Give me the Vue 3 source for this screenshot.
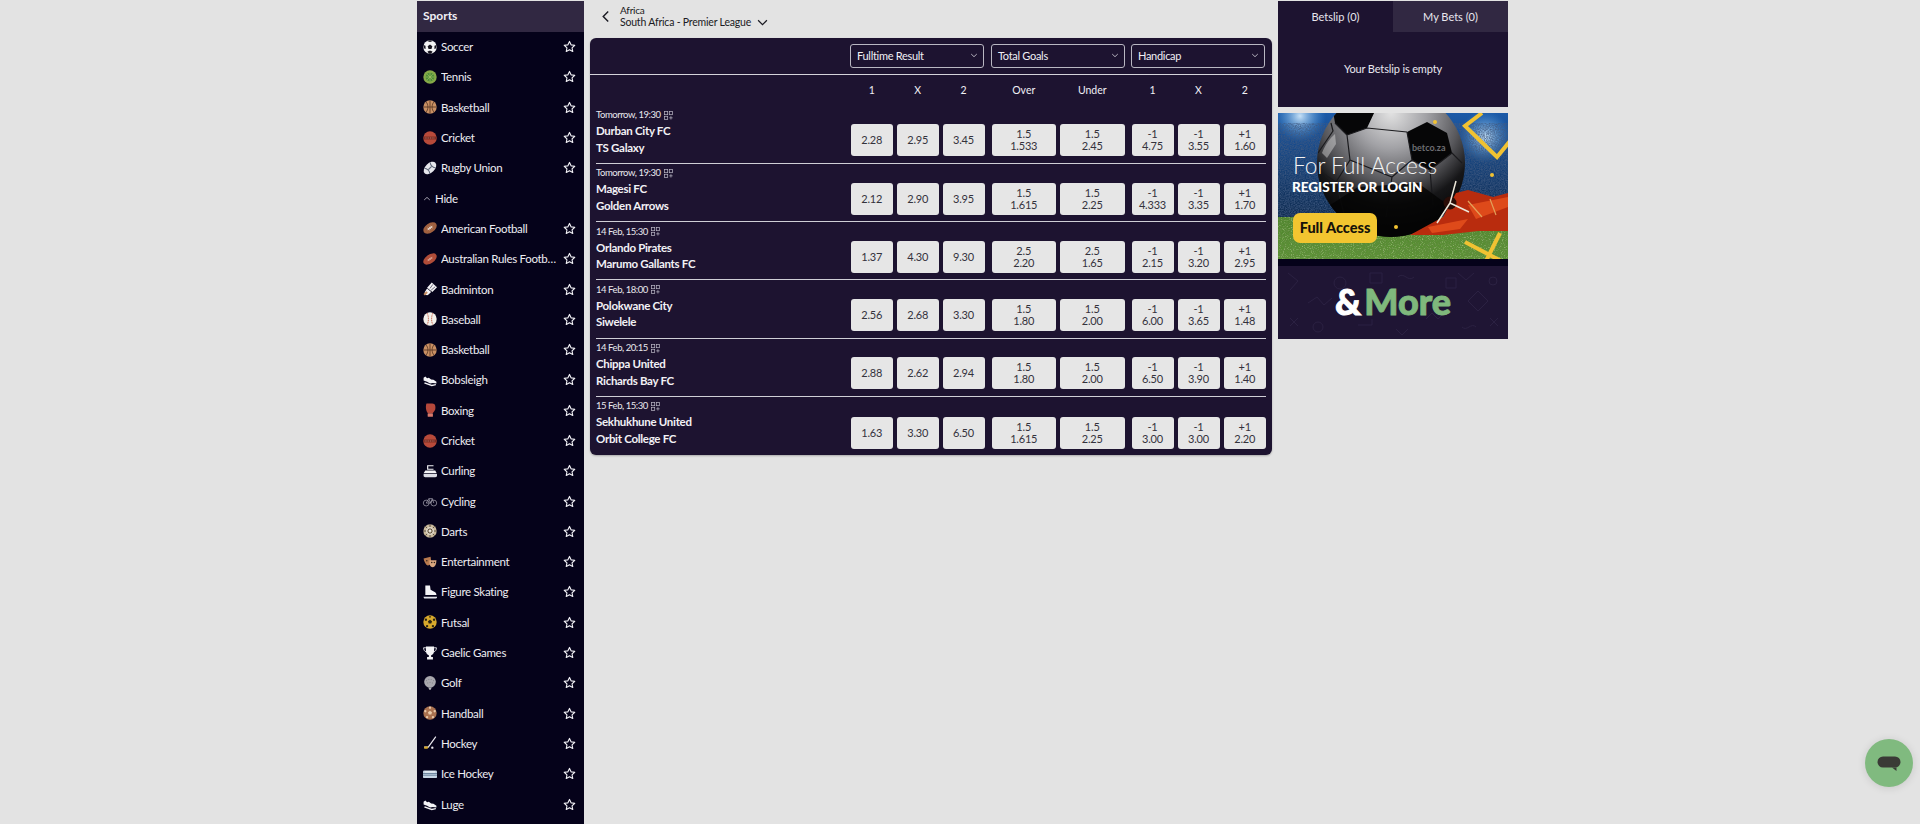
<template>
  <div class="page">
    <aside class="sidebar">
      <div class="side-title">Sports</div>
      <template v-for="(s, i) in sports" :key="i">
        <div v-if="s.hide" class="hide-row">
          <svg class="hide-caret" viewBox="0 0 10 6"><path d="M1.5 4.8 5 1.6l3.5 3.2" fill="none" stroke="#c9c6d2" stroke-width="1"/></svg>
          <span>Hide</span>
        </div>
        <div v-else class="side-row">
          <svg class="side-icon" viewBox="0 0 24 24"><g v-html="icons[s.icon]"></g></svg>
          <span class="side-name">{{ s.name }}</span>
          <svg class="star" viewBox="0 0 24 24"><path d="M12 2.6l2.9 6.3 6.8.8-5 4.7 1.3 6.8-6-3.4-6 3.4 1.3-6.8-5-4.700 6.800-.8z" fill="none" stroke="#f1f0f5" stroke-width="2.1" stroke-linejoin="round"/></svg>
        </div>
      </template>
    </aside>

    <main class="center">
      <div class="crumbs">
        <svg class="back" viewBox="0 0 10 14"><path d="M8 1.5 2.5 7 8 12.5" fill="none" stroke="#1a1a22" stroke-width="1.6"/></svg>
        <div>
          <div class="crumb-top">Africa</div>
          <div class="crumb-league">
            South Africa - Premier League
            <svg class="crumb-chev" viewBox="0 0 10 6"><path d="M1 1l4 4 4-4" fill="none" stroke="#1a1a22" stroke-width="1.1"/></svg>
          </div>
        </div>
      </div>

      <section class="panel">
        <div class="selects">
          <div v-for="m in markets" :key="m" class="select" :class="{ first: m === 'Fulltime Result' }">
            <span>{{ m }}</span>
            <svg viewBox="0 0 10 6"><path d="M1.5 1.2 5 4.5l3.5-3.3" fill="none" stroke="#d8d6de" stroke-width="1"/></svg>
          </div>
        </div>

        <div class="heads">
          <div class="grid-odds">
            <span>1</span><span>X</span><span>2</span>
            <span class="gap-left">Over</span><span>Under</span>
            <span class="gap-left">1</span><span>X</span><span>2</span>
          </div>
        </div>

        <div v-for="(g, i) in games" :key="i" class="game">
          <div class="teams">
            <div class="when">
              {{ g.when }}
              <svg class="bb" viewBox="0 0 10 10"><g fill="none" stroke="#b9b6c4" stroke-width=".8"><rect x=".5" y=".5" width="3.6" height="3.6"/><rect x="5.9" y=".5" width="3.6" height="3.6"/><rect x=".5" y="5.9" width="3.6" height="3.6"/><path d="M7.7 5.7v3.8M5.8 7.6h3.8"/></g></svg>
            </div>
            <div class="team">{{ g.home }}</div>
            <div class="team">{{ g.away }}</div>
          </div>
          <div class="grid-odds">
            <button v-for="(o, j) in g.odds" :key="j" class="odd" :class="{ 'gap-left': j === 3 || j === 5 }">
              <span v-for="(t, k) in o" :key="k">{{ t }}</span>
            </button>
          </div>
        </div>
      </section>
    </main>

    <aside class="right">
      <div class="slip">
        <div class="tabs">
          <div class="tab on">Betslip (0)</div>
          <div class="tab">My Bets (0)</div>
        </div>
        <div class="slip-empty">Your Betslip is empty</div>
      </div>
      <svg class="banner" viewBox="0 0 230 226">
        <defs>
          <linearGradient id="sky" x1="0" y1="0" x2="0" y2="1"><stop offset="0" stop-color="#1c5aa8"/><stop offset=".5" stop-color="#123766"/><stop offset="1" stop-color="#0a1a30"/></linearGradient>
          <radialGradient id="ball" cx=".5" cy=".16" r=".8"><stop offset="0" stop-color="#e2e2e2"/><stop offset=".3" stop-color="#a2a2a6"/><stop offset=".58" stop-color="#58585c"/><stop offset=".78" stop-color="#161618"/><stop offset="1" stop-color="#050505"/></radialGradient>
          <radialGradient id="glow"><stop offset="0" stop-color="#cfe8fb" stop-opacity=".95"/><stop offset="1" stop-color="#4b9be0" stop-opacity="0"/></radialGradient>
          <linearGradient id="grass" x1="0" y1="0" x2="0" y2="1"><stop offset="0" stop-color="#4a8428"/><stop offset="1" stop-color="#5a9432"/></linearGradient>
          <filter id="crowd" x="0" y="0" width="100%" height="100%">
            <feTurbulence type="fractalNoise" baseFrequency=".8" numOctaves="2" seed="4"/>
            <feColorMatrix values="0 0 0 0 .05  0 0 0 0 .1  0 0 0 0 .22  1.6 0 0 0 -.45"/>
          </filter>
          <filter id="blades" x="0" y="0" width="100%" height="100%">
            <feTurbulence type="fractalNoise" baseFrequency=".7 1.1" numOctaves="2" seed="9"/>
            <feColorMatrix values="0 0 0 0 .12  0 0 0 0 .26  0 0 0 0 .05  2.2 0 0 0 -.6"/>
          </filter>
          <filter id="speck" x="0" y="0" width="100%" height="100%">
            <feTurbulence type="fractalNoise" baseFrequency=".9" numOctaves="1" seed="2"/>
            <feColorMatrix values="0 0 0 0 .62  0 0 0 0 .78  0 0 0 0 .42  2 0 0 0 -1.1"/>
          </filter>
          <clipPath id="top"><rect width="230" height="146"/></clipPath>
          <clipPath id="ballClip"><circle cx="113" cy="50" r="74"/></clipPath>
        </defs>
        <g clip-path="url(#top)">
          <rect width="230" height="146" fill="url(#sky)"/>
          <circle cx="22" cy="3" r="26" fill="url(#glow)"/>
          <circle cx="207" cy="24" r="26" fill="url(#glow)"/>
          <rect y="10" width="230" height="94" filter="url(#crowd)"/>
          <rect y="104" width="230" height="42" fill="url(#grass)"/>
          <rect y="104" width="230" height="42" filter="url(#blades)"/>
          <rect y="104" width="230" height="42" filter="url(#speck)"/>

          <circle cx="113" cy="50" r="74" fill="url(#ball)"/>
          <g clip-path="url(#ballClip)">
            <path d="M55 -2h42l-8 17-20 7-12-12zM129 19l20-10 20 11 5 20-22 17-18-10z" fill="#060607"/>
            <path d="M40 40l15-22-2-8M57 10l12 12 3 25-14 22-18-12M69 22l20-7 40 4M129 19l5 28-20 17-42-17M134 47l18 10 3 35M114 64l-6 40M58 69l10 40M152 57l22-17 10 10" fill="none" stroke="#1a1a1d" stroke-width="1.2"/>
            <path d="M40 100l40-26 60-4 30 22-20 38H60z" fill="#040404" opacity=".8"/>
            <path d="M44 40c3-8 8-15 13-19l1 10-9 14z" fill="#efefef" opacity=".4"/>
          </g>

          <!-- plane over the grass -->
          <path d="M132 122l33-18 13-24 12-3 25 7 15-4v38l-30 0-35 4z" fill="#b92c0e"/>
          <path d="M190 92l40-8v10l-32 12zM150 114l40-8-8 10-28 4z" fill="#de4a1a"/>
          <path d="M190 88l14 16M212 86l6 16" stroke="#e2a15a" stroke-width="1.2"/>
          <circle cx="172" cy="90" r="6.5" fill="#2a0d07"/>
          <path d="M172 90l6-22M172 90l-13 20M172 90l19 9" stroke="#ece7da" stroke-width="1.5"/>

          <path d="M204 0l-17 13 32 31 13-16" fill="none" stroke="#f1c232" stroke-width="4"/>
          <path d="M187 129l38 20M222 120l-14 28" stroke="#f1c232" stroke-width="4"/>
          <circle cx="157" cy="9" r="2" fill="#f1c232"/><circle cx="214" cy="62" r="2" fill="#f1c232"/><circle cx="118" cy="114" r="2" fill="#f1c232"/>

          <text x="15" y="60.5" class="b-title">For Full Access</text>
          <text x="14" y="79" class="b-reg">REGISTER OR LOGIN</text>
          <text x="134" y="38" class="b-logo">betco.za</text>
          <rect x="15" y="100" width="84" height="30" rx="7" fill="#f2c530"/>
          <text x="57" y="120" text-anchor="middle" class="b-btn">Full Access</text>
        </g>
        <rect y="146" width="230" height="7" fill="#05021a"/>
        <rect y="153" width="230" height="73" fill="#1f1534"/>
        <g fill="none" stroke="#2b2142" stroke-width="1">
          <circle cx="62" cy="170" r="6"/><path d="M10 160l10 8-8 9M30 190l9-6 7 8 8-7M92 160h12v10h-12zM180 160l8 7 8-7M200 178l10 10-10 10-10-10zM12 205l8 8M20 205l-8 8M148 206l6-6 6 6 6-6M212 205l8 8M220 205l-8 8M120 164c6-6 10 6 16 0M80 212h14v-6M168 165h10v10h-10z"/>
          <circle cx="40" cy="214" r="5"/><circle cx="215" cy="168" r="4"/><path d="M118 216l6 6 6-6M184 214c5 5 9-5 14 0"/>
        </g>
        <text x="57" y="202" class="b-more"><tspan class="amp">&amp;</tspan><tspan class="more" dx="3">More</tspan></text>
      </svg>
    </aside>

    <div class="chat">
      <svg viewBox="0 0 24 16"><path d="M6 .5h12a5.5 5.5 0 0 1 0 11H6a5.5 5.5 0 0 1 0-11z" fill="#3a3a36"/><path d="M15 11.5l4.5 3.5v-3.500z" fill="#3a3a36"/></svg>
    </div>
  </div>
</template>

<script setup>
const ball = (body, lines) => `<circle cx="12" cy="12" r="11.5" fill="${body}"/>${lines}`

const sled = '<path d="M1 8l3-2 3 3 3-1 4 3 4 .5 5 3.5v3l-6-1-5 1-5-3-6-2z" fill="#f4f3f6"/><path d="M3 16l12 4 7-1v2l-7 1.5L2 18z" fill="#f4f3f6"/>'
const basket = ball('#c98f63', '<path d="M12 .5v23M.5 12h23M5 3c4.5 4.5 4.5 13.5 0 18M19 3c-4.5 4.5-4.5 13.5 0 18" fill="none" stroke="#5d3a26" stroke-width="1.5"/>')
const cricket = ball('#b84a3a', '<path d="M.8 9.5h22.4v5H.8z" fill="#7c2c22"/><path d="M3 12h18" stroke="#e8b7a5" stroke-width="1" stroke-dasharray="1.5 1.5"/>')

const icons = {
  soccer: ball('#f4f3f5', '<path d="M12 7.5l4 3-1.5 5h-5L8 10.5zM7 1.800l5 1.700 5-1.700-5-1.500zM.8 8.500l3.500 1.500.2 5.500-3-1.500zM23.200 8.500L19.700 10l-.2 5.500 3-1.500zM7.500 20l3-1.500h3l3 1.500-3 3.500h-3z" fill="#17141f"/>'),
  tennis: ball('#86a948', '<circle cx="12" cy="12" r="7.5" fill="#4f8f38"/><path d="M7 7l10 10M7 17L17 7M12 4.5v15M4.5 12h15" stroke="#a9c767" stroke-width="1"/>'),
  basket,
  cricket,
  rugby: '<g transform="rotate(-45 12 12)"><ellipse cx="12" cy="12" rx="13" ry="8" fill="#e6e6ec"/><path d="M5 5.5c3 3 3 10 0 13M19 5.5c-3 3-3 10 0 13" fill="none" stroke="#5f687a" stroke-width="1.8"/><path d="M8 12h8" stroke="#5f687a" stroke-width="2"/></g>',
  afl: '<g transform="rotate(-35 12 12)"><ellipse cx="12" cy="12" rx="13" ry="8" fill="#a0603f"/><path d="M7 12h10M9 9.5v5M12 9.5v5M15 9.5v5" stroke="#f4eee8" stroke-width="1.3"/></g>',
  aussie: '<g transform="rotate(-35 12 12)"><ellipse cx="12" cy="12" rx="13" ry="7.5" fill="#b04c38"/><path d="M7 12h10M9 10v4M12 10v4M15 10v4" stroke="#e9c6b8" stroke-width="1"/></g>',
  badminton: '<path d="M15 1l9 8-8 8-9-7z" fill="#f4f3f6"/><path d="M7 11l7 6-5 5c-3 2-7-2-6-5z" fill="#f4f3f6"/><path d="M7 17l-5 5" stroke="#c98f63" stroke-width="3.5"/><path d="M17 4l-5 7M21 8l-7 6" stroke="#05021a"/>',
  baseball: ball('#f2efe9', '<path d="M7 1.800c3 5.500 3 14.900 0 20.400M17 1.800c-3 5.500-3 14.900 0 20.400" fill="none" stroke="#c2573f" stroke-width="1.5" stroke-dasharray="2 1"/>'),
  bob: sled,
  boxing: '<path d="M6 1h10c5 0 6 5 5 10-1 3-3 4-4 6H8C5 14 4 5 6 1z" fill="#b6483b"/><rect x="8" y="17.5" width="9" height="6" rx="1" fill="#d9796b"/>',
  curling: '<path d="M7 2h11v2H9v4h9v2H7z" fill="#f4f3f6"/><path d="M4 11h17l2.5 5H1z" fill="#f4f3f6"/><path d="M1 17h23v3c0 1.5-1 2.5-3 2.5H4c-2 0-3-1-3-2.5z" fill="#dcdce4"/>',
  cycling: '<g fill="none" stroke="#9f9ca9" stroke-width="1.3"><circle cx="5.5" cy="15.5" r="5"/><circle cx="18.5" cy="15.5" r="5"/><path d="M5.5 15.5 10 8h6l2.5 7.5M10 8l3 7.5H5.5M16 8l-3 7.5"/></g>',
  darts: ball('#c8b89a', '<g stroke="#3a3026" stroke-width="1.3"><path d="M12 .5v23M.5 12h23M4 4l16 16M20 4L4 20"/></g><circle cx="12" cy="12" r="6" fill="none" stroke="#f3efe6" stroke-width="1.5"/><circle cx="12" cy="12" r="2" fill="#f3efe6"/>'),
  ent: '<path d="M1 6l12-3 1 8c0 4-3 7-6 7-3-1-6-6-7-12z" fill="#b87a4e"/><path d="M11 9l12 0c0 7-2 11-6 12-3 0-6-3-6-7z" fill="#d9a67e"/><circle cx="6.5" cy="10" r="1.3" fill="#33241b"/><circle cx="15" cy="13" r="1.3" fill="#33241b"/><circle cx="19.5" cy="13" r="1.3" fill="#33241b"/>',
  skate: '<path d="M4 1h8l1 7 7 4c2 1 3 3 3 5H4z" fill="#f4f3f6"/><path d="M1 20h23v1.5c0 1-1 1.5-2 1.5H3c-1 0-2-1-2-3z" fill="#e1e1e8"/>',
  futsal: ball('#d8a92c', '<g fill="#2b2412"><path d="M12 8l3.5 2.5-1.3 4h-4.400l-1.300-4z"/><circle cx="5" cy="8" r="2"/><circle cx="19" cy="8" r="2"/><circle cx="7" cy="19" r="2"/><circle cx="17" cy="19" r="2"/><circle cx="12" cy="3" r="1.5"/></g>'),
  gaelic: '<path d="M5 1h14v7c0 5-3 7-5 8v3h3v4H7v-4h3v-3c-2-1-5-3-5-8z" fill="#f4f3f6"/><path d="M5 3H1c0 4 2 6 4 7M19 3h4c0 4-2 6-4 7" fill="none" stroke="#f4f3f6" stroke-width="1.5"/>',
  golf: '<circle cx="12" cy="10" r="10" fill="#a9a8ae"/><path d="M8 20h8l-3 2v2h-2v-2z" fill="#cfcfd4"/><path d="M6 8h.1M10 6h.1M14 6h.1M18 8h.1M8 12h.1M12 11h.1M16 12h.1" stroke="#7b7a80" stroke-width="1.5" stroke-linecap="round"/>',
  handball: ball('#a9714f', '<g fill="#e7c8a8"><path d="M12 8l3.5 2.5-1.3 4h-4.400l-1.300-4z"/><circle cx="12" cy="3" r="2"/><circle cx="4" cy="9" r="2"/><circle cx="20" cy="9" r="2"/><circle cx="7" cy="19" r="2"/><circle cx="17" cy="19" r="2"/></g>'),
  hockey: '<path d="M22 1L9 19H2" fill="none" stroke="#eceaf0" stroke-width="2"/><path d="M2 18h7l-1 4H2z" fill="#d8a92c"/><circle cx="16" cy="20" r="2" fill="#eceaf0"/>',
  ice: '<rect x="0" y="6" width="24" height="13" rx="2" fill="#c7d7e6"/><path d="M0 11h24M0 14h24" stroke="#3d5c7a" stroke-width="1.2"/><path d="M3 8.5h18" stroke="#fff" stroke-width="1.5"/>',
  luge: sled,
}

const sports = [
  { name: 'Soccer', icon: 'soccer' },
  { name: 'Tennis', icon: 'tennis' },
  { name: 'Basketball', icon: 'basket' },
  { name: 'Cricket', icon: 'cricket' },
  { name: 'Rugby Union', icon: 'rugby' },
  { hide: true },
  { name: 'American Football', icon: 'afl' },
  { name: 'Australian Rules Football', icon: 'aussie' },
  { name: 'Badminton', icon: 'badminton' },
  { name: 'Baseball', icon: 'baseball' },
  { name: 'Basketball', icon: 'basket' },
  { name: 'Bobsleigh', icon: 'bob' },
  { name: 'Boxing', icon: 'boxing' },
  { name: 'Cricket', icon: 'cricket' },
  { name: 'Curling', icon: 'curling' },
  { name: 'Cycling', icon: 'cycling' },
  { name: 'Darts', icon: 'darts' },
  { name: 'Entertainment', icon: 'ent' },
  { name: 'Figure Skating', icon: 'skate' },
  { name: 'Futsal', icon: 'futsal' },
  { name: 'Gaelic Games', icon: 'gaelic' },
  { name: 'Golf', icon: 'golf' },
  { name: 'Handball', icon: 'handball' },
  { name: 'Hockey', icon: 'hockey' },
  { name: 'Ice Hockey', icon: 'ice' },
  { name: 'Luge', icon: 'luge' },
]

const markets = ['Fulltime Result', 'Total Goals', 'Handicap']

const games = [
  { when: 'Tomorrow, 19:30', home: 'Durban City FC', away: 'TS Galaxy', odds: [['2.28'], ['2.95'], ['3.45'], ['1.5', '1.533'], ['1.5', '2.45'], ['-1', '4.75'], ['-1', '3.55'], ['+1', '1.60']] },
  { when: 'Tomorrow, 19:30', home: 'Magesi FC', away: 'Golden Arrows', odds: [['2.12'], ['2.90'], ['3.95'], ['1.5', '1.615'], ['1.5', '2.25'], ['-1', '4.333'], ['-1', '3.35'], ['+1', '1.70']] },
  { when: '14 Feb, 15:30', home: 'Orlando Pirates', away: 'Marumo Gallants FC', odds: [['1.37'], ['4.30'], ['9.30'], ['2.5', '2.20'], ['2.5', '1.65'], ['-1', '2.15'], ['-1', '3.20'], ['+1', '2.95']] },
  { when: '14 Feb, 18:00', home: 'Polokwane City', away: 'Siwelele', odds: [['2.56'], ['2.68'], ['3.30'], ['1.5', '1.80'], ['1.5', '2.00'], ['-1', '6.00'], ['-1', '3.65'], ['+1', '1.48']] },
  { when: '14 Feb, 20:15', home: 'Chippa United', away: 'Richards Bay FC', odds: [['2.88'], ['2.62'], ['2.94'], ['1.5', '1.80'], ['1.5', '2.00'], ['-1', '6.50'], ['-1', '3.90'], ['+1', '1.40']] },
  { when: '15 Feb, 15:30', home: 'Sekhukhune United', away: 'Orbit College FC', odds: [['1.63'], ['3.30'], ['6.50'], ['1.5', '1.615'], ['1.5', '2.25'], ['-1', '3.00'], ['-1', '3.00'], ['+1', '2.20']] },
]
</script>

<style>
html, body { margin: 0; background: #e3e3e3; }
</style>

<style scoped>
.page {
  height: 824px; overflow: hidden; position: relative;
  display: grid; grid-template-columns: 167px 682px 230px; column-gap: 6px;
  padding: 1px 0 0 417px; box-sizing: border-box;
  background: #e3e3e3;
  font-family: Lato, "Liberation Sans", sans-serif;
  font-size: 12px;
}

/* Sidebar */
.sidebar { background: #05021a; color: #eeedf2; overflow: hidden; }
.side-title {
  height: 30.5px; line-height: 30px; padding-left: 6px;
  background: #312842; font-weight: 700; font-size: 12px; color: #f0eff4;
}
.side-row, .hide-row { height: 30.3px; display: flex; align-items: center; font-size: 11.5px; letter-spacing: -.3px; }
.side-row { padding: 0 8px 0 6px; }
.side-icon { width: 14px; height: 14px; flex-shrink: 0; margin-right: 4px; overflow: visible; }
.side-name { flex: 1; min-width: 0; white-space: nowrap; overflow: hidden; text-overflow: ellipsis; margin-right: 6px; }
.star { width: 13px; height: 13px; flex-shrink: 0; }
.hide-row { padding-left: 6px; }
.hide-caret { width: 8px; height: 5px; margin-right: 4px; }

/* Centre */
.crumbs { height: 37px; box-sizing: border-box; padding: 0 0 6px 11px; display: flex; align-items: center; color: #1a1a22; }
.back { width: 9px; height: 13px; margin-right: 10px; }
.crumb-top { font-size: 10px; line-height: 11px; letter-spacing: -.2px; }
.crumb-league { font-size: 10.5px; line-height: 12px; letter-spacing: -.2px; display: flex; align-items: center; }
.crumb-chev { width: 11px; height: 7px; margin-left: 6px; }

.panel {
  background: #1d1330; border-radius: 6px; color: #f0eff4;
  height: 417px; box-shadow: 0 1px 2px rgba(0, 0, 0, .25);
}
.selects {
  height: 37px; box-sizing: border-box; display: flex; justify-content: flex-end; gap: 6px;
  padding: 5.5px 7px 0 6px; border-bottom: 1px solid #d4d3da;
}
.select {
  width: 134px; height: 24px; box-sizing: border-box; border: 1px solid #b9b7c2; border-radius: 3px;
  display: flex; align-items: center; justify-content: space-between; padding: 0 3px 0 6px;
  font-size: 11px; letter-spacing: -.3px;
}
.select.first { margin-right: 1px; }
.select svg { width: 8px; height: 5px; margin-right: 2px; }

.grid-odds {
  display: grid; grid-template-columns: 42.5px 41.5px 42px 67.5px 64.5px 45px 42px 42.5px;
  column-gap: 4px; margin-left: auto;
}
.gap-left { margin-left: 3px; }
.heads { height: 30.5px; box-sizing: border-box; display: flex; padding: 0 6px 1px; align-items: center; font-size: 10.5px; }
.heads .grid-odds span { text-align: center; }

.game {
  margin: 0 6px; height: 58.3px; box-sizing: border-box;
  display: flex; align-items: flex-end; padding-bottom: 6.5px;
  border-bottom: 1px solid #cfced6;
}
.game:last-child { border-bottom: none; }
.teams { align-self: stretch; display: flex; flex-direction: column; padding-top: 2.5px; }
.when { font-size: 9.5px; line-height: 14px; letter-spacing: -.45px; display: flex; align-items: center; color: #e9e8ee; }
.bb { width: 9px; height: 9px; margin-left: 3px; }
.team { font-weight: 700; font-size: 11.5px; line-height: 16.5px; letter-spacing: -.3px; color: #f2f1f5; }
.when + .team { margin-top: 1px; }

.odd {
  height: 32px; padding: 0; border: none; border-radius: 3px;
  background: #e6e6e6; color: #34323c; font: inherit; font-size: 11px; line-height: 12px; letter-spacing: -.2px;
  display: flex; flex-direction: column; align-items: center; justify-content: center;
}

/* Right */
.right { display: flex; flex-direction: column; gap: 6px; align-items: stretch; }
.slip { background: #1d1330; height: 106px; color: #e8e7ee; font-size: 11px; }
.tabs { display: flex; height: 31px; }
.tab { flex: 1; display: flex; align-items: center; justify-content: center; background: #312842; }
.tab.on { background: #1d1330; }
.slip-empty { text-align: center; padding-top: 30px; letter-spacing: -.15px; }
.banner { display: block; width: 230px; height: 226px; }
.b-title { font: 300 22.6px Lato, sans-serif; fill: #f4f4f4; }
.b-reg { font: 900 13.5px Lato, sans-serif; fill: #fff; }
.b-logo { font: 700 9px Lato, sans-serif; fill: #6d6d72; }
.b-btn { font: 900 14.5px Lato, sans-serif; fill: #15120a; }
.b-more { font: 900 36px Lato, sans-serif; stroke-width: .9px; }
.amp { fill: #fff; stroke: #fff; }
.more { fill: #7fb87c; stroke: #7fb87c; }

/* Chat widget */
.chat {
  position: absolute; right: 7px; bottom: 37px; width: 48px; height: 48px; border-radius: 50%;
  background: #80ba7f; box-shadow: 0 1px 8px rgba(0, 0, 0, .12);
  display: flex; align-items: center; justify-content: center;
}
.chat svg { width: 24px; height: 16px; margin-top: 2px; }
</style>
